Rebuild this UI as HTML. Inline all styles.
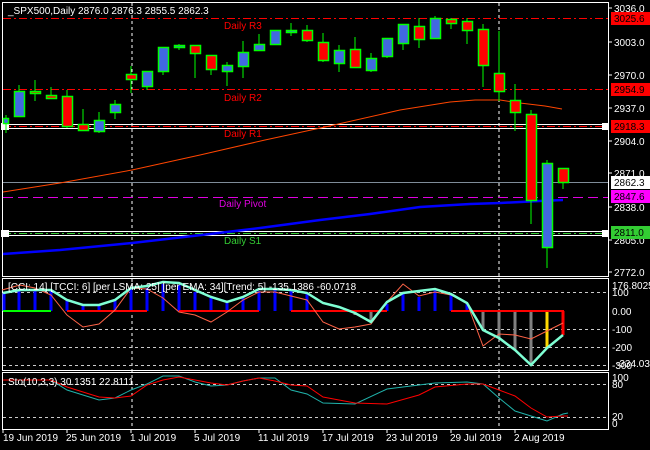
<!DOCTYPE html>
<html><head><meta charset="utf-8"><style>
html,body{margin:0;padding:0;background:#000;width:650px;height:450px;overflow:hidden}
svg text{font-family:"Liberation Sans",sans-serif;font-size:10px}
.c rect{stroke-width:1.5}
</style></head><body>
<svg width="650" height="450" viewBox="0 0 650 450" xmlns="http://www.w3.org/2000/svg">
<rect width="650" height="450" fill="#000"/>
<g fill="none" stroke="#fff" stroke-width="1">
<rect x="2.5" y="2.5" width="606" height="274"/>
<rect x="2.5" y="278.5" width="606" height="92"/>
<rect x="2.5" y="372.5" width="606" height="57"/>
</g>
<g stroke="#fff" stroke-dasharray="3,3">
<line x1="132" y1="3" x2="132" y2="429"/>
<line x1="499" y1="3" x2="499" y2="429"/>
</g>
<line x1="3" y1="18.5" x2="608" y2="18.5" stroke="#f00" stroke-dasharray="8,3,2,3"/>
<line x1="3" y1="89.5" x2="608" y2="89.5" stroke="#f00" stroke-dasharray="8,3,2,3"/>
<line x1="3" y1="124.5" x2="608" y2="124.5" stroke="#fff"/>
<line x1="3" y1="128.5" x2="608" y2="128.5" stroke="#fff"/>
<line x1="3" y1="126.5" x2="608" y2="126.5" stroke="#f00" stroke-dasharray="8,3,2,3"/>
<line x1="3" y1="182.5" x2="608" y2="182.5" stroke="#7f8c99"/>
<line x1="3" y1="197.5" x2="608" y2="197.5" stroke="#e000e0" stroke-dasharray="10,5"/>
<line x1="3" y1="231.5" x2="608" y2="231.5" stroke="#fff"/>
<line x1="3" y1="235.5" x2="608" y2="235.5" stroke="#fff"/>
<line x1="3" y1="233.5" x2="608" y2="233.5" stroke="#3c3" stroke-dasharray="8,3,2,3"/>
<rect x="1" y="123" width="8" height="7" fill="#fff"/>
<rect x="1" y="230" width="8" height="7" fill="#fff"/>
<rect x="602" y="123" width="7" height="7" fill="#fff"/>
<rect x="602" y="230" width="7" height="7" fill="#fff"/>
<text x="224" y="29" fill="#f00">Daily R3</text>
<text x="224" y="101" fill="#f00">Daily R2</text>
<text x="224" y="137" fill="#f00">Daily R1</text>
<text x="219" y="207" fill="#e000e0">Daily Pivot</text>
<text x="224" y="244" fill="#3c3">Daily S1</text>
<polyline fill="none" stroke="#ff4500" stroke-width="1" points="3,192 60,183 132,170 200,155 265,140 325,127 400,110 450,102 475,100 500,100 520,103 545,106 562,109"/>
<polyline fill="none" stroke="#0000ff" stroke-width="2.5" points="3,254 60,250 132,243 210,234 260,228 320,220 370,214 420,207 470,204 500,203 540,201 563,200"/>
<g class="c" stroke="#00ff00" stroke-width="1">
<line x1="6" y1="115" x2="6" y2="133"/><rect x="3.5" y="118.5" width="5" height="5" fill="#4169e1"/>
<line x1="19" y1="85" x2="19" y2="117"/><rect x="14.5" y="91.5" width="10" height="25" fill="#4169e1"/>
<line x1="35" y1="80" x2="35" y2="101"/><rect x="30.5" y="91.5" width="10" height="2" fill="#f00"/>
<line x1="51" y1="87" x2="51" y2="99"/><rect x="46.5" y="95.5" width="10" height="3" fill="#f00"/>
<line x1="67" y1="90" x2="67" y2="128"/><rect x="62.5" y="96.5" width="10" height="30" fill="#f00"/>
<line x1="83" y1="109" x2="83" y2="131"/><rect x="78.5" y="124.5" width="10" height="6" fill="#f00"/>
<line x1="99" y1="112" x2="99" y2="133"/><rect x="94.5" y="120.5" width="10" height="11" fill="#4169e1"/>
<line x1="115" y1="100" x2="115" y2="119"/><rect x="110.5" y="104.5" width="10" height="8" fill="#4169e1"/>
<line x1="131" y1="66" x2="131" y2="93"/><rect x="126.5" y="74.5" width="10" height="5" fill="#f00"/>
<line x1="147" y1="71" x2="147" y2="90"/><rect x="142.5" y="71.5" width="10" height="15" fill="#4169e1"/>
<line x1="163" y1="47" x2="163" y2="75"/><rect x="158.5" y="47.5" width="10" height="24" fill="#4169e1"/>
<line x1="179" y1="44" x2="179" y2="50"/><rect x="174.5" y="45.5" width="10" height="2" fill="#4169e1"/>
<line x1="195" y1="45" x2="195" y2="78"/><rect x="190.5" y="45.5" width="10" height="8" fill="#f00"/>
<line x1="211" y1="55" x2="211" y2="75"/><rect x="206.5" y="55.5" width="10" height="14" fill="#f00"/>
<line x1="227" y1="62" x2="227" y2="86"/><rect x="222.5" y="65.5" width="10" height="6" fill="#4169e1"/>
<line x1="243" y1="41" x2="243" y2="78"/><rect x="238.5" y="52.5" width="10" height="14" fill="#4169e1"/>
<line x1="259" y1="34" x2="259" y2="51"/><rect x="254.5" y="44.5" width="10" height="6" fill="#4169e1"/>
<line x1="275" y1="30" x2="275" y2="45"/><rect x="270.5" y="30.5" width="10" height="14" fill="#4169e1"/>
<line x1="291" y1="23" x2="291" y2="36"/><rect x="286.5" y="30.5" width="10" height="2" fill="#4169e1"/>
<line x1="307" y1="25" x2="307" y2="42"/><rect x="302.5" y="30.5" width="10" height="10" fill="#f00"/>
<line x1="323" y1="33" x2="323" y2="62"/><rect x="318.5" y="42.5" width="10" height="18" fill="#f00"/>
<line x1="339" y1="45" x2="339" y2="72"/><rect x="334.5" y="50.5" width="10" height="13" fill="#4169e1"/>
<line x1="355" y1="37" x2="355" y2="68"/><rect x="350.5" y="49.5" width="10" height="18" fill="#f00"/>
<line x1="371" y1="53" x2="371" y2="72"/><rect x="366.5" y="58.5" width="10" height="12" fill="#4169e1"/>
<line x1="387" y1="38" x2="387" y2="58"/><rect x="382.5" y="38.5" width="10" height="18" fill="#4169e1"/>
<line x1="403" y1="24" x2="403" y2="50"/><rect x="398.5" y="24.5" width="10" height="19" fill="#4169e1"/>
<line x1="419" y1="18" x2="419" y2="48"/><rect x="414.5" y="26.5" width="10" height="13" fill="#f00"/>
<line x1="435" y1="16" x2="435" y2="39"/><rect x="430.5" y="18.5" width="10" height="20" fill="#4169e1"/>
<line x1="451" y1="18" x2="451" y2="29"/><rect x="446.5" y="19.5" width="10" height="4" fill="#f00"/>
<line x1="467" y1="18" x2="467" y2="44"/><rect x="462.5" y="21.5" width="10" height="9" fill="#f00"/>
<line x1="483" y1="24" x2="483" y2="87"/><rect x="478.5" y="29.5" width="10" height="36" fill="#f00"/>
<line x1="499" y1="31" x2="499" y2="101"/><rect x="494.5" y="73.5" width="10" height="18" fill="#f00"/>
<line x1="515" y1="84" x2="515" y2="131"/><rect x="510.5" y="100.5" width="10" height="12" fill="#f00"/>
<line x1="531" y1="110" x2="531" y2="224"/><rect x="526.5" y="114.5" width="10" height="86" fill="#f00"/>
<line x1="547" y1="160" x2="547" y2="268"/><rect x="542.5" y="163.5" width="10" height="84" fill="#4169e1"/>
<line x1="563" y1="168" x2="563" y2="189"/><rect x="558.5" y="168.5" width="10" height="14" fill="#f00"/>
</g>
<text x="8" y="14" fill="#fff">_SPX500,Daily  2876.0 2876.3 2855.5 2862.3</text>
<g fill="#fff">
<text x="614" y="12">3036.0</text>
<text x="614" y="46">3003.0</text>
<text x="614" y="79">2970.0</text>
<text x="614" y="112">2937.0</text>
<text x="614" y="145">2904.0</text>
<text x="614" y="177">2871.0</text>
<text x="614" y="211">2838.0</text>
<text x="614" y="244">2805.0</text>
<text x="614" y="276">2772.0</text>
</g>
<g stroke="#fff"><line x1="609" y1="8" x2="612" y2="8"/><line x1="609" y1="42" x2="612" y2="42"/><line x1="609" y1="75" x2="612" y2="75"/><line x1="609" y1="108" x2="612" y2="108"/><line x1="609" y1="141" x2="612" y2="141"/><line x1="609" y1="173" x2="612" y2="173"/><line x1="609" y1="207" x2="612" y2="207"/><line x1="609" y1="240" x2="612" y2="240"/><line x1="609" y1="272" x2="612" y2="272"/></g>
<rect x="611" y="12" width="39" height="13" fill="#f00"/><text x="614" y="22" fill="#000">3025.6</text>
<rect x="611" y="83" width="39" height="13" fill="#f00"/><text x="614" y="93" fill="#000">2954.9</text>
<rect x="611" y="120" width="39" height="13" fill="#f00"/><text x="614" y="130" fill="#000">2918.3</text>
<rect x="611" y="176" width="39" height="13" fill="#fff"/><text x="614" y="186" fill="#000">2862.3</text>
<rect x="611" y="190" width="39" height="13" fill="#f0f"/><text x="614" y="200" fill="#000">2847.6</text>
<rect x="611" y="226" width="39" height="13" fill="#3c3"/><text x="614" y="236" fill="#000">2811.0</text>
<g stroke="#ccc" stroke-dasharray="3,3">
<line x1="3" y1="292.5" x2="608" y2="292.5"/>
<line x1="3" y1="329.5" x2="608" y2="329.5"/>
<line x1="3" y1="347.5" x2="608" y2="347.5"/>
<line x1="3" y1="365.5" x2="608" y2="365.5"/>
</g>
<g stroke="#00f" stroke-width="3">
<line x1="4" y1="311" x2="4" y2="293"/><line x1="19" y1="311" x2="19" y2="290"/><line x1="35" y1="311" x2="35" y2="290"/><line x1="51" y1="311" x2="51" y2="290"/>
<line x1="67" y1="311" x2="67" y2="300"/><line x1="83" y1="311" x2="83" y2="305"/><line x1="99" y1="311" x2="99" y2="305"/><line x1="115" y1="311" x2="115" y2="300"/>
<line x1="131" y1="311" x2="131" y2="288"/><line x1="147" y1="311" x2="147" y2="288"/><line x1="163" y1="311" x2="163" y2="284"/><line x1="179" y1="311" x2="179" y2="285"/>
<line x1="195" y1="311" x2="195" y2="292"/><line x1="211" y1="311" x2="211" y2="298"/><line x1="227" y1="311" x2="227" y2="303"/><line x1="243" y1="311" x2="243" y2="298"/>
<line x1="259" y1="311" x2="259" y2="291"/><line x1="275" y1="311" x2="275" y2="290"/><line x1="291" y1="311" x2="291" y2="291"/><line x1="307" y1="311" x2="307" y2="294"/>
<line x1="387" y1="311" x2="387" y2="304"/><line x1="403" y1="311" x2="403" y2="293"/><line x1="419" y1="311" x2="419" y2="297"/><line x1="435" y1="311" x2="435" y2="290"/><line x1="451" y1="311" x2="451" y2="295"/><line x1="467" y1="311" x2="467" y2="304"/>
</g>
<g stroke="#808080" stroke-width="3">
<line x1="355" y1="311" x2="355" y2="315"/><line x1="371" y1="311" x2="371" y2="322"/>
<line x1="483" y1="311" x2="483" y2="330"/><line x1="499" y1="311" x2="499" y2="338"/><line x1="515" y1="311" x2="515" y2="350"/><line x1="531" y1="311" x2="531" y2="365"/>
</g>
<line x1="547" y1="311" x2="547" y2="348" stroke="#ffd700" stroke-width="3"/>
<line x1="563" y1="311" x2="563" y2="335" stroke="#f00" stroke-width="3"/>
<g stroke="#f00" stroke-width="2">
<line x1="67" y1="311" x2="147" y2="311"/><line x1="179" y1="311" x2="259" y2="311"/><line x1="291" y1="311" x2="387" y2="311"/><line x1="451" y1="311" x2="564" y2="311"/>
</g>
<line x1="3" y1="311" x2="51" y2="311" stroke="#0f0" stroke-width="2"/>
<polyline fill="none" stroke="#ff6347" stroke-width="1" points="2,290 20,285 35,288 51,295 67,315 83,327 99,324 115,310 131,288 147,289 163,298 179,312 195,315 211,322 227,312 243,300 259,292 275,292 291,296 307,300 323,322 339,329 355,327 371,324 387,302 403,284 419,296 435,292 451,295 467,303 483,346 499,334 515,335 531,339 547,331 563,323"/>
<polyline fill="none" stroke="#7fffd4" stroke-width="2.5" points="3,293 20,290 51,290 67,300 83,305 99,305 115,300 131,288 147,286 163,282 179,283 195,290 211,297 227,302 243,297 259,289 275,289 291,290 307,293 323,303 339,307 355,313 371,322 387,302 403,293 419,291 435,289 451,294 467,303 483,330 499,338 515,350 531,365 547,348 563,335"/>
<text x="8" y="290" fill="#fff">[CCI: 14] [TCCI: 6] [per LSMA: 25] [per EMA: 34][Trend: 5]  -135.1386 -60.0718</text>
<g fill="#fff">
<text x="612" y="289">176.8025</text>
<text x="612" y="296">100</text>
<text x="612" y="315">0.00</text>
<text x="612" y="333">-100</text>
<text x="612" y="351">-200</text>
<text x="612" y="369">-300</text>
<text x="616" y="367">-334.030</text>
</g>
<g stroke="#ccc" stroke-dasharray="3,3">
<line x1="3" y1="384.5" x2="608" y2="384.5"/>
<line x1="3" y1="417.5" x2="608" y2="417.5"/>
</g>
<polyline fill="none" stroke="#20b2aa" stroke-width="1" points="3,380 51,380 67,390 99,400 115,398 131,390 147,384 163,376 179,376 195,382 211,386 227,385 243,381 259,378 275,378 291,390 307,394 323,403 355,404 387,389 419,385 435,383 467,382 483,384 499,398 515,411 531,416 547,421 563,414 568,413"/>
<polyline fill="none" stroke="#f00" stroke-width="1" points="3,380 51,380 67,387 99,397 115,398 131,396 147,385 163,380 179,377 195,380 211,383 227,385 243,381 259,378 275,381 291,385 307,386 323,397 355,403 387,404 419,395 435,387 467,384 483,384 499,390 515,396 531,408 547,417 563,416 568,416"/>
<text x="8" y="385" fill="#fff">Sto(10,3,3) 30.1351 22.8111</text>
<g fill="#fff">
<text x="612" y="381">100</text>
<text x="612" y="388">80</text>
<text x="612" y="420">20</text>
<text x="612" y="427">0</text>
</g>
<g fill="#fff">
<text x="3" y="441">19 Jun 2019</text>
<text x="66" y="441">25 Jun 2019</text>
<text x="130" y="441">1 Jul 2019</text>
<text x="194" y="441">5 Jul 2019</text>
<text x="258" y="441">11 Jul 2019</text>
<text x="322" y="441">17 Jul 2019</text>
<text x="386" y="441">23 Jul 2019</text>
<text x="450" y="441">29 Jul 2019</text>
<text x="514" y="441">2 Aug 2019</text>
</g>
<g stroke="#fff"><line x1="3" y1="430" x2="3" y2="433"/><line x1="67" y1="430" x2="67" y2="433"/><line x1="131" y1="430" x2="131" y2="433"/><line x1="195" y1="430" x2="195" y2="433"/><line x1="259" y1="430" x2="259" y2="433"/><line x1="323" y1="430" x2="323" y2="433"/><line x1="387" y1="430" x2="387" y2="433"/><line x1="451" y1="430" x2="451" y2="433"/><line x1="515" y1="430" x2="515" y2="433"/></g>
</svg>
</body></html>
